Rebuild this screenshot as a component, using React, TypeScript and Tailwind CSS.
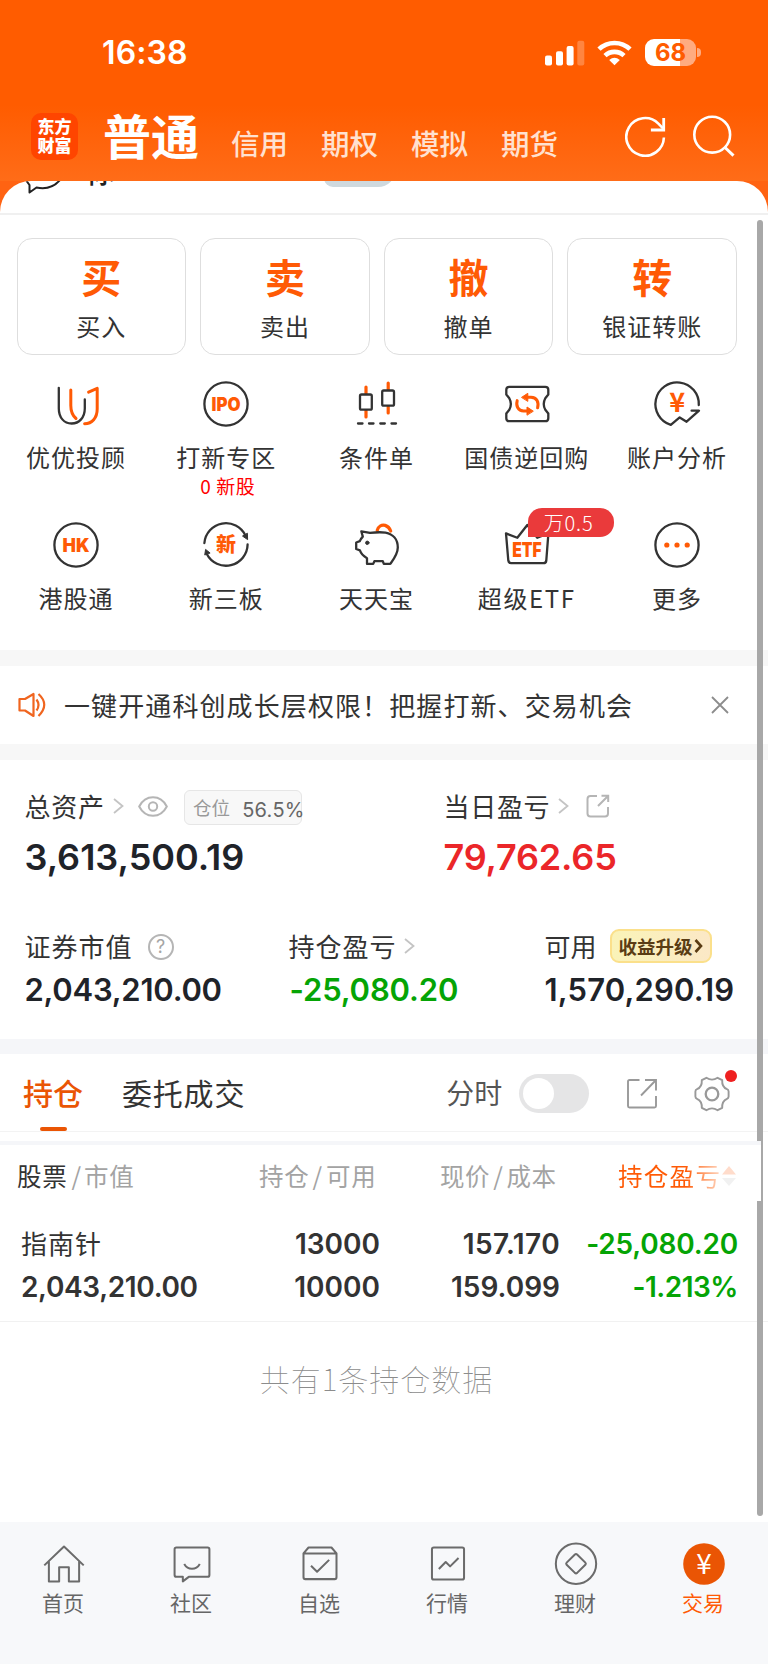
import React from 'react';

const cjk = "font-['Noto_Sans_CJK_SC',sans-serif]";
const num = "font-['Inter',sans-serif]";

const topTabs = ['信用', '期权', '模拟', '期货'];

const trades = [
  { mark: '买', label: '买入' },
  { mark: '卖', label: '卖出' },
  { mark: '撤', label: '撤单' },
  { mark: '转', label: '银证转账' },
];

function IconBox({ children }: { children: React.ReactNode }) {
  return (
    <svg
      className="w-12 h-12 shrink-0 overflow-visible"
      viewBox="0 0 48 48"
      fill="none"
      stroke="#333333"
      strokeWidth="2.3"
      strokeLinecap="round"
      strokeLinejoin="round"
    >
      {children}
    </svg>
  );
}

function IconText({ children, y, size, width }: { children: string; y: number; size: number; width: number }) {
  return (
    <text
      x={24 - width / 2}
      y={y}
      fontSize={size}
      textLength={width}
      lengthAdjust="spacingAndGlyphs"
      fill="#ff5a05"
      stroke="none"
      className="font-['Inter','Noto_Sans_CJK_SC',sans-serif] font-black"
    >
      {children}
    </text>
  );
}

const services = [
  {
    label: '优优投顾',
    icon: (
      <IconBox>
        <path d="M18.8 10V25.5C18.8 32 20.5 35.5 24 38.5" stroke="#ff5a05" strokeWidth="3" />
        <path d="M36.6 12.2L45.2 8.4V29C45.2 38 40 43.6 32.6 43.8" stroke="#ff5a05" strokeWidth="3" />
        <path d="M6.8 7.8V28.5C6.8 37.5 12 43.5 19.6 43.5S32.8 37.5 32.8 28.5V19.5" />
      </IconBox>
    ),
  },
  {
    label: '打新专区',
    sub: '0 新股',
    icon: (
      <IconBox>
        <circle cx="24" cy="24" r="21.6" />
        <IconText y={30.8} size={19} width={29}>IPO</IconText>
      </IconBox>
    ),
  },
  {
    label: '条件单',
    icon: (
      <IconBox>
        <path d="M14 7V13.5M14 30.5V37M36.2 3V9.5M36.2 26.5V33" stroke="#ff5a05" strokeWidth="3.2" />
        <rect x="8" y="14.5" width="11.8" height="15.2" rx="1.5" />
        <rect x="30.2" y="10.5" width="11.8" height="15.2" rx="1.5" />
        <path d="M6 43.5H10.5M17 43.5H21.5M28.3 43.5H32.8M39.5 43.5H44" />
      </IconBox>
    ),
  },
  {
    label: '国债逆回购',
    icon: (
      <IconBox>
        <path d="M6.3 6.8H42.3Q45.3 6.8 45.3 9.8V14.5L42.3 18.2Q39.2 24 42.3 29.8L45.3 33.5V38.2Q45.3 41.2 42.3 41.2H6.3Q3.3 41.2 3.3 38.2V33.5L6.3 29.8Q9.4 24 6.3 18.2L3.3 14.5V9.8Q3.3 6.8 6.3 6.8Z" />
        <path d="M34.6 27.8C36 22.5 34 17.2 28 17.2H24M14.2 20.6C12.8 26 15 31 20.6 31H24.6" stroke="#ff5a05" strokeWidth="3" />
        <path d="M18.8 17.2L24.8 13.3V21ZM30 31L24 27V34.8Z" fill="#ff5a05" stroke="#ff5a05" strokeWidth="1" />
      </IconBox>
    ),
  },
  {
    label: '账户分析',
    icon: (
      <IconBox>
        <path d="M45.8 25A21.7 21.7 0 1 0 17.8 44.8L26.7 37.4L33.6 41.7L46 30.7H38.6" />
        <text x="24.3" y="32" fontSize="27" textAnchor="middle" fill="#ff5a05" stroke="none" className="font-['Noto_Sans_CJK_SC',sans-serif] font-bold">¥</text>
      </IconBox>
    ),
  },
  {
    label: '港股通',
    icon: (
      <IconBox>
        <circle cx="24" cy="24" r="21.6" />
        <IconText y={31} size={19} width={27}>HK</IconText>
      </IconBox>
    ),
  },
  {
    label: '新三板',
    icon: (
      <IconBox>
        <path d="M2.4 22A21.6 21.6 0 0 1 43.4 14.5M45.6 23.5A21.6 21.6 0 0 1 4.8 33" />
        <path d="M40.8 15.3L45.6 18.6L45.4 12.6ZM2.8 33.6L3.6 28.4L7.8 31.8Z" fill="#333333" strokeWidth="1" />
        <IconText y={31.3} size={20} width={20}>新</IconText>
      </IconBox>
    ),
  },
  {
    label: '天天宝',
    icon: (
      <IconBox>
        <path d="M25.2 9.5C26.2 5.5 29.5 3.6 33.2 4.4Q37 5.6 38.7 10" stroke="#ff5a05" strokeWidth="3.2" />
        <path d="M9.3 10.3L18 11.8C24 11.2 29 11 33.5 11.6C41 13 45.8 18.5 45.8 26.5C45.8 33 42 37.8 38.3 42.9H31.8L30.8 40.2H22.4L21.2 42.9H15V37.2C11.2 35 8.8 32 7.9 29.4L4.2 28V21.5L7.8 20.2C8.6 18 9.5 17 10.8 15.6Z" />
        <circle cx="15.3" cy="21.8" r="1.7" fill="#333333" stroke="#333333" strokeWidth="1" />
      </IconBox>
    ),
  },
  {
    label: '超级ETF',
    badge: '万0.5',
    icon: (
      <IconBox>
        <path d="M3 12.4L14.3 16.8L24.3 4L34.3 16.8L45.4 12.4L43.3 39.5Q43 42.2 40.5 42.2H8.2Q5.6 42.2 5.3 39.5Z" />
        <IconText y={35.6} size={20} width={29.5}>ETF</IconText>
      </IconBox>
    ),
  },
  {
    label: '更多',
    icon: (
      <IconBox>
        <circle cx="24" cy="24" r="21.6" />
        <g fill="#ff5a05" stroke="none">
          <circle cx="13.8" cy="24" r="2.6" />
          <circle cx="24" cy="24" r="2.6" />
          <circle cx="34.2" cy="24" r="2.6" />
        </g>
      </IconBox>
    ),
  },
];

const navItems = [
  {
    label: '首页',
    icon: <path d="M2.5 25.5L24 5L45.5 25.5M7.5 21V43H18.7V27.5H29.3V43H40.5V21" />,
  },
  {
    label: '社区',
    icon: (
      <>
        <path d="M7 6H41Q43 6 43 8V36Q43 38 41 38H20.5L14 43V38H7Q5 38 5 36V8Q5 6 7 6Z" />
        <path d="M15.5 24C19.5 31 28.5 31 32.5 24" />
      </>
    ),
  },
  {
    label: '自选',
    icon: (
      <>
        <path d="M6 12.5L11.5 6H36.5L42 12.5V38.5Q42 40.5 40 40.5H8Q6 40.5 6 38.5ZM6 12.5H42" />
        <path d="M14.2 26L20.8 32.5L34 19.5" />
      </>
    ),
  },
  {
    label: '行情',
    icon: (
      <>
        <rect x="6.5" y="6" width="35" height="35" rx="2" />
        <path d="M14 29.5L21.5 21.8L26.3 26.6L35.5 17.5" />
      </>
    ),
  },
  {
    label: '理财',
    icon: (
      <>
        <circle cx="24" cy="23.7" r="22" />
        <path d="M22.8 13.7Q24 12.6 25.2 13.7L34.2 22.5Q35.3 23.7 34.2 24.9L25.2 33.7Q24 34.8 22.8 33.7L13.8 24.9Q12.7 23.7 13.8 22.5Z" />
      </>
    ),
  },
];

function Chevron() {
  return (
    <svg className="w-[11px] h-4 shrink-0" viewBox="0 0 11 16" fill="none" stroke="#c4c4c4" strokeWidth="1.8">
      <path d="M1 1L9.5 8L1 15" />
    </svg>
  );
}

function Header() {
  return (
    <header className="h-[181px] bg-[linear-gradient(#ff5c00_0px,#ff5c00_105px,#ff6c18_181px)] text-white">
      <div className="h-[105px] flex items-center pl-[102px] pr-[67px]">
        <span className={`${num} text-[32px] font-semibold leading-none tracking-[0.1px]`}>16:38</span>
        <svg className="ml-auto w-[40px] h-[26px]" viewBox="0 0 40 26" fill="#fff">
          <rect x="0" y="15.5" width="7" height="10" rx="2" />
          <rect x="11" y="11.2" width="7" height="14.3" rx="2" />
          <rect x="21.6" y="6" width="7" height="19.5" rx="2" />
          <rect x="32.3" y="0.8" width="7" height="24.7" rx="2" opacity=".25" />
        </svg>
        <svg className="ml-3 w-[35px] h-[26px]" viewBox="0 0 35 26" fill="none" stroke="#fff" strokeWidth="4.6">
          <path d="M2 9.2C10.5.9 24.5.9 33 9.2" />
          <path d="M8 15.6C13.3 10.6 21.7 10.6 27 15.6" />
          <path d="M17.5 25.2L12.2 19.9Q17.5 15.6 22.8 19.9Z" fill="#fff" stroke="none" />
        </svg>
        <div className="ml-[13px] w-[51px] h-[27px] rounded-[9px] bg-[linear-gradient(90deg,#fff_68%,#ffab80_68%)] flex items-center justify-center">
          <span className={`${num} text-[#ff5c00] text-[24px] font-bold leading-none`}>68</span>
        </div>
        <div className="ml-px w-[4px] h-[9px] rounded-r-full bg-[#ffab80]" />
      </div>
      <div className="flex items-start pl-[31px] pr-[31px]">
        <div className="mt-[8px] w-[47px] h-[47px] pb-[3px] rounded-[10px] bg-[#ff4500] flex items-center justify-center font-['Noto_Sans_CJK_SC',sans-serif] font-black text-[17px] leading-[19px]">
          <p className="w-[34px] break-all">东方财富</p>
        </div>
        <span className={`${cjk} ml-[25px] mt-[-2px] h-[62px] leading-[62px] text-[48px] font-bold`}>普通</span>
        <div className={`${cjk} ml-[32px] mt-[18px] flex gap-[33px] text-[28.5px] leading-10 font-medium text-[#ffe1d0]`}>
          {topTabs.map((t) => (
            <span key={t} className="w-[57px]">{t}</span>
          ))}
        </div>
        <svg className="ml-auto mt-[8px] w-[112px] h-[48px] shrink-0" viewBox="0 0 112 48" fill="none" stroke="#fff" strokeWidth="2.6">
          <path d="M38.9 24.5A18.8 18.8 0 1 1 33.4 10.6L38 15.3" />
          <path d="M38.7 5V17H25.9" strokeWidth="2.8" />
          <circle cx="87.2" cy="21.7" r="17.9" />
          <path d="M99.5 34L108.5 42.6" strokeWidth="3" />
        </svg>
      </div>
    </header>
  );
}

function Services() {
  return (
    <section className="h-[435px] pt-[23px]">
      <div className="grid grid-cols-4 gap-[14px] pl-[16.5px] w-[737px]">
        {trades.map((t) => (
          <div key={t.label} className={`${cjk} h-[117px] pt-[17px] rounded-[15px] border border-[#dedede] flex flex-col items-center`}>
            <span className="text-[40px] leading-10 font-bold text-[#ff5a05]">{t.mark}</span>
            <span className="mt-[14px] text-[24px] leading-8 tracking-[1px] text-[#333]">{t.label}</span>
          </div>
        ))}
      </div>
      <div className="mt-[25px] ml-px grid grid-cols-5 w-[751px]">
        {services.map((s) => (
          <div key={s.label} className={`${cjk} relative h-[141px] flex flex-col items-center`}>
            {s.icon}
            <span className={`mt-[13px] text-[24px] leading-8 text-[#333] whitespace-nowrap ${s.badge ? 'tracking-[1.6px]' : 'tracking-[1px]'}`}>{s.label}</span>
            {s.sub && <span className="ml-[3px] mt-px text-[19px] leading-6 tracking-[0.6px] text-[#ff0000]">{s.sub}</span>}
            {s.badge && (
              <span className="absolute left-[76px] top-[-13px] w-[86px] h-[29px] pr-[4px] rounded-[14px] rounded-bl-none bg-[#ea3a3b] text-white text-[20px] leading-[29px] tracking-[0.8px] text-center font-light">
                {s.badge}
              </span>
            )}
          </div>
        ))}
      </div>
    </section>
  );
}

function Notice() {
  return (
    <section className="h-[110px] border-y-[16px] border-[#f7f7f7] flex items-center pl-[18px] pr-[39px]">
      <svg className="w-[28px] h-[26px]" viewBox="0 0 28 26" fill="none" stroke="#f0651f" strokeWidth="2.2">
        <path d="M1.5 7H7L15.5 2V24L7 18.5H1.5Z" strokeLinejoin="round" />
        <path d="M18.5 7.5Q22.5 13 18.5 18.5M20.5 2Q32 12.5 20.5 24" />
      </svg>
      <span className={`${cjk} ml-[18px] text-[26px] leading-9 tracking-[1.1px] text-[#333]`}>一键开通科创成长层权限！把握打新、交易机会</span>
      <svg className="ml-auto w-[18px] h-[18px]" viewBox="0 0 18 18" stroke="#8c8c8c" strokeWidth="1.8">
        <path d="M1 1L17 17M17 1L1 17" />
      </svg>
    </section>
  );
}

function Assets() {
  return (
    <section className="h-[279px] pt-[28px] pl-[24.5px]">
      <div className="flex">
        <div className="w-[419px]">
          <div className="h-9 flex items-center">
            <span className={`${cjk} text-[26px] leading-9 tracking-[0.7px] text-[#333]`}>总资产</span>
            <div className="ml-[8px]"><Chevron /></div>
            <svg className="ml-[14px] w-[30px] h-[21px]" viewBox="0 0 30 21" fill="none" stroke="#b5b5b5" strokeWidth="2">
              <path d="M1.2 10.5C7.5-1.8 22.5-1.8 28.8 10.5C22.5 22.8 7.5 22.8 1.2 10.5Z" />
              <circle cx="15" cy="10.5" r="4.2" />
            </svg>
            <div className="ml-[16.5px] mt-[2px] w-[118px] h-[35px] rounded-[6px] border border-[#e6e6e6] bg-[#f8f8f8] flex items-center pl-[8px] whitespace-nowrap">
              <span className={`${cjk} text-[18.5px] leading-7 text-[#999]`}>仓位</span>
              <span className={`${num} ml-[12px] mt-[5px] text-[20px] leading-none tracking-[0.3px] text-[#666]`}>56.5%</span>
            </div>
          </div>
          <div className={`${num} mt-[12px] h-[42px] leading-[42px] text-[36px] font-semibold text-[#1f2329]`}>3,613,500.19</div>
        </div>
        <div>
          <div className="h-9 flex items-center">
            <span className={`${cjk} text-[26px] leading-9 tracking-[0.7px] text-[#333]`}>当日盈亏</span>
            <div className="ml-[8px]"><Chevron /></div>
            <svg className="ml-[17px] w-[24px] h-[24px]" viewBox="0 0 24 24" fill="none" stroke="#b5b5b5" strokeWidth="2">
              <path d="M11 2H4.5Q1.5 2 1.5 5V19.5Q1.5 22.5 4.5 22.5H19Q22 22.5 22 19.5V13M15.5 1.7H22.2V8M22 2L12 12" />
            </svg>
          </div>
          <div className={`${num} mt-[12px] h-[42px] leading-[42px] text-[36px] font-semibold tracking-[-0.2px] text-[#eb2629]`}>79,762.65</div>
        </div>
      </div>
      <div className="mt-[50px] flex">
        <div className="w-[264px]">
          <div className="h-9 flex items-center">
            <span className={`${cjk} text-[26px] leading-9 tracking-[1px] text-[#333]`}>证券市值</span>
            <div className={`${num} ml-[15px] mt-[2px] w-[26px] h-[26px] rounded-full border-2 border-[#b5b5b5] text-[#a5a5a5] text-[18px] leading-[22px] text-center`}>?</div>
          </div>
          <div className={`${num} mt-[8px] h-9 leading-9 text-[31px] font-semibold tracking-[-0.25px] text-[#1f2329]`}>2,043,210.00</div>
        </div>
        <div className="w-[256px]">
          <div className="h-9 flex items-center">
            <span className={`${cjk} text-[26px] leading-9 tracking-[1px] text-[#333]`}>持仓盈亏</span>
            <div className="ml-[7px]"><Chevron /></div>
          </div>
          <div className={`${num} pl-px mt-[8px] h-9 leading-9 text-[31px] font-semibold tracking-[-0.15px] text-[#05a405]`}>-25,080.20</div>
        </div>
        <div>
          <div className="h-9 flex items-center">
            <span className={`${cjk} text-[26px] leading-9 text-[#333]`}>可用</span>
            <div className={`${cjk} ml-[13px] w-[102px] h-[34px] rounded-[9px] border-2 border-[#fbe08b] bg-[linear-gradient(90deg,#faf3b8,#fbe8c6)] text-[#5a3c14] text-[18.5px] leading-7 font-bold flex items-center justify-center`}>
              收益升级
              <svg className="w-[9px] h-[14px] ml-px" viewBox="0 0 9 14" fill="none" stroke="#5a3c14" strokeWidth="2.6">
                <path d="M1.5 1L7 7L1.5 13" />
              </svg>
            </div>
          </div>
          <div className={`${num} mt-[8px] h-9 leading-9 text-[31px] font-semibold tracking-[0.15px] text-[#1f2329]`}>1,570,290.19</div>
        </div>
      </div>
    </section>
  );
}

function Positions() {
  return (
    <section className="h-[483px] border-t-[15px] border-[#f5f6f9]">
      <div className="h-[78px] pl-[23px] flex border-b border-[#f3f3f3]">
        <div className="flex flex-col items-center">
          <span className={`${cjk} mt-[18px] text-[30px] leading-10 font-medium text-[#ea5504]`}>持仓</span>
          <div className="mt-[15px] w-[27px] h-[5px] rounded-full bg-[#ea5504]" />
        </div>
        <span className={`${cjk} ml-[39px] mt-[18px] text-[30px] leading-10 tracking-[0.8px] text-[#333]`}>委托成交</span>
        <span className={`${cjk} ml-[201px] mt-[18px] text-[28px] leading-10 text-[#555]`}>分时</span>
        <div className="ml-[17px] mt-[20px] w-[70px] h-[39px] rounded-full bg-[#e5e5e6] p-[4px]">
          <div className="w-[31px] h-[31px] rounded-full bg-white" />
        </div>
        <svg className="ml-[38px] mt-[24px] w-[30px] h-[31px]" viewBox="0 0 30 31" fill="none" stroke="#999" strokeWidth="1.9">
          <path d="M12.5 2H2.5Q1 2 1 3.5V28Q1 29.5 2.5 29.5H27.5Q29 29.5 29 28V18M18 2H29V12.5M29 2L14 17.5" />
        </svg>
        <div className="relative ml-[37px] mt-[21px] w-[36px] h-[38px]">
          <svg className="w-[36px] h-[38px]" viewBox="0 0 36 38" fill="none" stroke="#999" strokeWidth="1.9" strokeLinejoin="round">
            <path d="M12.4 2.8Q18 6.5 23.6 2.8L28.2 5.2Q27.8 12 33 14.2Q34.6 14.8 34.6 16.4V21.6Q34.6 23.2 33 23.8Q27.8 26 28.2 32.8L23.6 35.2Q18 31.5 12.4 35.2L7.8 32.8Q8.2 26 3 23.8Q1.4 23.2 1.4 21.6V16.4Q1.4 14.8 3 14.2Q8.2 12 7.8 5.2Z" />
            <circle cx="18" cy="19" r="6.3" strokeWidth="2.3" />
          </svg>
          <div className="absolute left-[31px] top-[-5px] w-[12px] h-[12px] rounded-full bg-[#ef2020]" />
        </div>
      </div>
      <div className="relative z-10 mt-[9px] w-[761px] h-[60px] border-t-4 border-[#f5f6f9] bg-white">
        <div className={`${cjk} h-[62px] pl-[17px] flex items-center text-[24.5px] text-[#a3a3a3]`}>
          <div className="w-[242px] tracking-[0.8px]"><span className="text-[#333]">股票</span><span className="ml-[4px] mr-[2px]">/</span>市值</div>
          <div className="w-[181px] tracking-[0.8px]">持仓<span className="mx-[3px]">/</span>可用</div>
          <div className="w-[178px] tracking-[0.6px]">现价<span className="mx-[3px]">/</span>成本</div>
          <span className="bg-[linear-gradient(90deg,#ff5a05_65%,#ffd9c4)] bg-clip-text text-transparent tracking-[1.3px]">持仓盈亏</span>
          <svg className="ml-px w-[14px] h-[20px]" viewBox="0 0 14 20">
            <path d="M0 8.5L7 0L14 8.5Z" fill="#ffdccb" />
            <path d="M0 12L7 20L14 12Z" fill="#f1f1f1" />
          </svg>
        </div>
      </div>
      <div className={`${num} h-[121px] pt-[22px] flex text-[28px] leading-[43px] font-semibold text-[#333] border-b border-[#f1f1f1]`}>
        <div className="w-[210px] pl-[21px]">
          <div className={`${cjk} mt-[-2px] mb-[2px] text-[26px] font-normal tracking-[1px]`}>指南针</div>
          <div className="tracking-[-0.35px]">2,043,210.00</div>
        </div>
        <div className="w-[170px] text-right">
          <div>13000</div>
          <div>10000</div>
        </div>
        <div className="w-[180px] text-right">
          <div className="tracking-[0.4px]">157.170</div>
          <div>159.099</div>
        </div>
        <div className="w-[178px] text-right text-[#05a405]">
          <div className="tracking-[-0.2px]">-25,080.20</div>
          <div className="tracking-[-0.5px]">-1.213%</div>
        </div>
      </div>
      <div className={`${cjk} mt-[34px] w-[753px] text-center text-[30px] leading-[44px] font-thin tracking-[1px] text-[#8c8c8c]`}>共有1条持仓数据</div>
    </section>
  );
}

function BottomNav() {
  return (
    <nav className={`${cjk} h-[142px] pt-[20px] bg-[#f7f8fa] grid grid-cols-6 text-[21px] text-[#666]`}>
      {navItems.map((n) => (
        <div key={n.label} className="flex flex-col items-center">
          <svg className="w-11 h-11" viewBox="0 0 48 48" fill="none" stroke="#6b6b6b" strokeWidth="2.2" strokeLinejoin="round">
            {n.icon}
          </svg>
          <span className="mt-[2px] mr-[2px] leading-7">{n.label}</span>
        </div>
      ))}
      <div className="flex flex-col items-center text-[#ff5a05]">
        <svg className="w-11 h-11" viewBox="0 0 44 44">
          <circle cx="22" cy="22" r="20.8" fill="#ea5504" />
          <text x="22" y="32" fontSize="28" textAnchor="middle" fill="#fff" className="font-['Noto_Sans_CJK_SC',sans-serif]">¥</text>
        </svg>
        <span className="mt-[2px] mr-[2px] leading-7">交易</span>
      </div>
    </nav>
  );
}

export default function App() {
  return (
    <div className="relative w-[768px] h-[1665px] overflow-hidden bg-white">
      <Header />
      <div className="bg-[#ff6312]">
        <div className="h-[34px] rounded-t-[31px] bg-white border-b-2 border-[#f0f0f0] overflow-hidden flex items-start">
          <svg className="ml-[24px] w-[40px] h-[14px]" viewBox="0 0 40 14" fill="none" stroke="#222" strokeWidth="2" strokeLinejoin="round">
            <path d="M2.5 0L5.5 4V11.5L12.5 6.5Q27 9.5 36-1" />
          </svg>
          <span className={`${cjk} ml-[22px] mt-[-27px] text-[29px] leading-8 font-medium text-[#222]`}>你</span>
          <div className="ml-[209px] mt-[-21px] w-[72px] h-[27px] rounded-[10px] rounded-br-[20px] bg-[#cfd9de]" />
        </div>
      </div>
      <Services />
      <Notice />
      <Assets />
      <Positions />
      <BottomNav />
      <div className="absolute left-[757px] top-[220px] w-[6px] h-[1296px] rounded-full bg-[#a8a8a8]" />
    </div>
  );
}
